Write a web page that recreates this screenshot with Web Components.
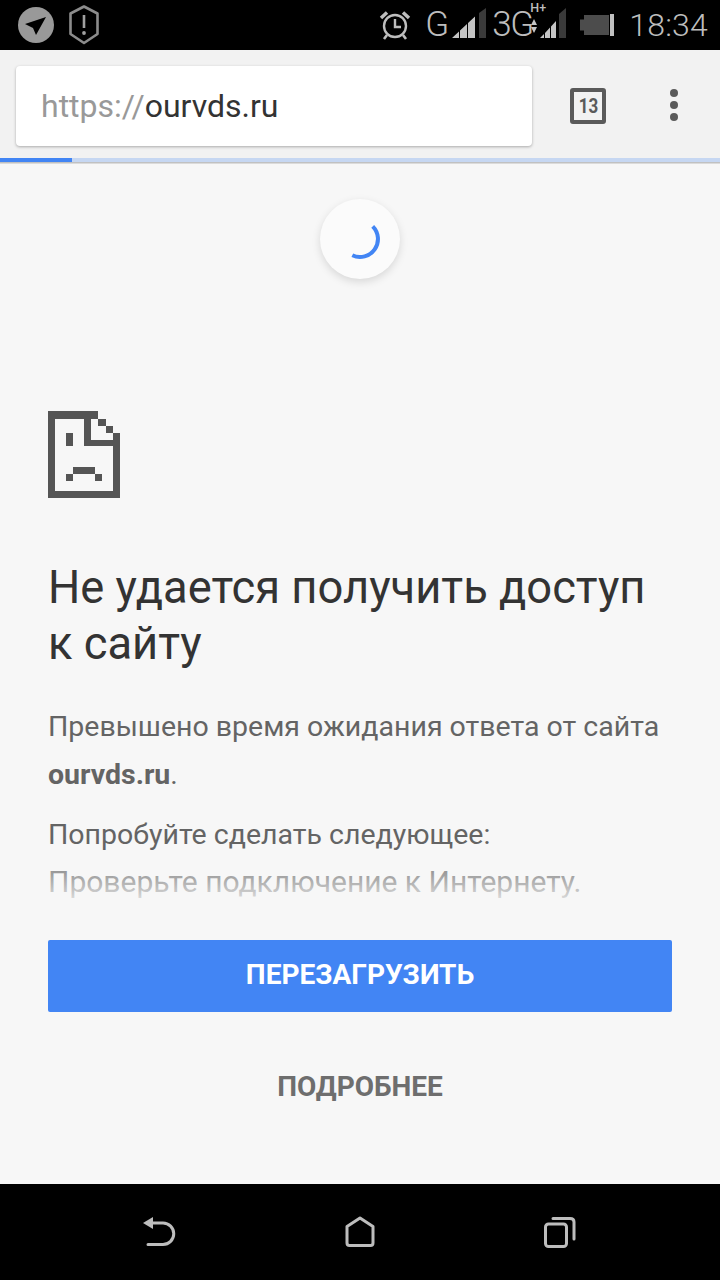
<!DOCTYPE html>
<html lang="ru">
<head>
<meta charset="utf-8">
<title>ourvds.ru</title>
<style>
    html, body { margin: 0; padding: 0; background: #000; }
    body { width: 720px; height: 1280px; overflow: hidden; display: flex; flex-direction: column; font-family: Roboto, sans-serif; }
</style>
</head>
<body>
<status-bar></status-bar>
<browser-toolbar url-scheme="https://" url-host="ourvds.ru" tabs="13"></browser-toolbar>
<error-page>
    <span slot="title">Не удается получить доступ к сайту</span>
    <span slot="message">Превышено время ожидания ответа от сайта <b>ourvds.ru</b>.</span>
    <span slot="try">Попробуйте сделать следующее:</span>
    <span slot="hint">Проверьте подключение к Интернету.</span>
</error-page>
<nav-bar></nav-bar>

<script>
class StatusBar extends HTMLElement {
    connectedCallback() {
        this.attachShadow({ mode: 'open' });
        this.shadowRoot.innerHTML = `
        <style>
            :host { display: flex; flex: none; height: 50px; background: #000; align-items: center; justify-content: space-between; color: #bdbdbd; font-family: Roboto, sans-serif; }
            .left { display: flex; align-items: center; gap: 14px; padding-left: 17px; }
            .right { display: flex; align-items: center; padding-right: 12px; height: 50px; position: relative; }
            svg { display: block; flex: none; }
            .g { font-size: 35px; font-weight: 300; line-height: 24px; }
            .hplus { position: absolute; left: 151px; top: 3px; font-size: 12.500px; font-weight: 500; line-height: 10px; }
            .time { font-size: 32px; font-weight: 300; line-height: 50px; margin-left: 15px; letter-spacing: .2px; }
        </style>
        <div class="left">
            <svg width="38" height="38" viewBox="0 0 38 38"><circle cx="19" cy="19" r="18" fill="#999"/><path d="M8 18 L29 11 L19 29 L16 22 Z" fill="#000"/></svg>
            <svg width="30" height="40" viewBox="0 0 30 40"><path d="M15 1.500 L28.500 8.500 V29 L15 38 L1.500 29 V8.500 Z" fill="none" stroke="#8c8c8c" stroke-width="2.600" stroke-linejoin="round"/><rect x="13.700" y="10" width="2.600" height="13" fill="#a0a0a0"/><circle cx="15" cy="28" r="1.900" fill="#a0a0a0"/></svg>
        </div>
        <div class="right">
            <svg width="32" height="32" viewBox="0 0 32 32"><g fill="none" stroke="#bdbdbd" stroke-width="2.400"><circle cx="16" cy="17" r="11"/><path d="M16 10 V18 H22"/><path d="M2 9 L8 3.500 M30 9 L24 3.500" stroke-width="3.500"/><path d="M8 26 L5 30 M24 26 L27 30" stroke-width="2.600"/></g></svg>
            <span class="g" style="margin-left:14px;width:23px">G</span>
            <svg width="34" height="30" viewBox="0 0 34 30" style="margin-left:4px;margin-top:-4px"><path d="M0 30 L7 23.500 V30 Z M8 22.500 L15 16 V30 H8 Z M16 15 L23 8.500 V30 H16 Z" fill="#c4c4c4"/><path d="M27 5 L34 0 V30 H27 Z" fill="#3a3a3a"/></svg>
            <span class="g" style="margin-left:6px;width:36px;letter-spacing:-1.500px;white-space:nowrap">3G</span>
            <span class="hplus">H+</span>
            <svg width="35" height="30" viewBox="0 0 35 30" style="margin-left:3px;margin-top:-4px"><path d="M0 17 L3 11 L6 17 Z M0 19 H6 L3 25 Z" fill="#c4c4c4"/><path d="M9 30 L13 26 V30 Z M14 25 L19 19.500 V30 H14 Z M20 18.500 L25 13 V30 H20 Z" fill="#c4c4c4"/><path d="M28 6 L35 0 V30 H28 Z" fill="#3a3a3a"/></svg>
            <svg width="34" height="22" viewBox="0 0 34 22" style="margin-left:14px"><path d="M0 5.500 H4 V1 H29 V21 H4 V16.500 H0 Z" fill="#4c4c4c"/><rect x="30" y="0" width="4" height="22" fill="#c0c0c0"/></svg>
            <span class="time">18:34</span>
        </div>`;
    }
}

class BrowserToolbar extends HTMLElement {
    connectedCallback() {
        this.attachShadow({ mode: 'open' });
        this.shadowRoot.innerHTML = `
        <style>
            :host { display: flex; flex-direction: column; flex: none; height: 114px; background: #f2f2f2; font-family: Roboto, sans-serif; position: relative; }
            .row { flex: 1; display: flex; align-items: flex-start; padding: 16px 0 0 16px; }
            .omnibox { width: 516px; height: 80px; box-sizing: border-box; background: #fff; border-radius: 4px; box-shadow: 0 1px 3px rgba(0,0,0,.3); display: flex; align-items: center; padding-left: 25px; font-size: 32px; color: #333; white-space: nowrap; }
            .scheme { color: #999; }
            .tabs { width: 36px; height: 36px; box-sizing: border-box; border: 4px solid #5a5a5a; border-radius: 3px; margin: 22px 0 0 38px; display: flex; align-items: center; justify-content: center; font-size: 20px; font-weight: 700; color: #5a5a5a; }
            .tabs span { display: block; transform: scaleX(.85); }
            .menu { display: flex; flex-direction: column; gap: 4px; margin: 23px 0 0 64px; }
            .menu i { display: block; width: 8px; height: 8px; border-radius: 50%; background: #5a5a5a; }
            .progress { flex: none; height: 4px; background: #c6d7f2; }
            .progress div { width: 72px; height: 4px; background: #4285f4; }
            .edge { flex: none; height: 2px; background: linear-gradient(#b4b4b4, #e8e8e8); }
        </style>
        <div class="row">
            <div class="omnibox"><span class="scheme">${this.getAttribute('url-scheme')}</span><span>${this.getAttribute('url-host')}</span></div>
            <div class="tabs"><span>${this.getAttribute('tabs')}</span></div>
            <div class="menu"><i></i><i></i><i></i></div>
        </div>
        <div class="progress"><div></div></div>
        <div class="edge"></div>`;
    }
}

class ErrorPage extends HTMLElement {
    connectedCallback() {
        this.attachShadow({ mode: 'open' });
        this.shadowRoot.innerHTML = `
        <style>
            :host { display: block; flex: 1; min-height: 0; background: #f7f7f7; position: relative; overflow: hidden; font-family: Roboto, sans-serif; color: #646464; }
            .spinner { position: absolute; left: 320px; top: 35px; width: 80px; height: 80px; border-radius: 50%; background: #fbfbfb; box-shadow: 0 3px 8px rgba(0,0,0,.13); }
            .spinner svg { display: block; }
            .main { padding: 247px 48px 0; height: 737px; box-sizing: border-box; overflow: hidden; position: relative; }
            .icon { display: block; width: 72px; height: 87px; }
            h1 { margin: 62px 0 0; font-size: 45.300px; line-height: 56px; font-weight: 400; color: #333; width: 620px; }
            p { margin: 0; font-size: 28.500px; line-height: 48px; width: 630px; white-space: nowrap; }
            .msg { margin-top: 31px; white-space: normal; width: 624px; }
            .try { margin-top: 12px; }
            .hint { font-size: 30px; margin-top: -1px; }
            .fade { position: absolute; left: 0; right: 0; top: 704px; height: 40px; background: linear-gradient(rgba(247,247,247,.3), rgba(247,247,247,.75) 70%, #f7f7f7); }
            .buttons { position: absolute; left: 48px; right: 48px; top: 776px; }
            button { display: block; width: 100%; border: 0; border-radius: 2px; font: 700 28px Roboto, sans-serif; margin: 0; padding: 0 0 3px; }
            .reload { height: 72px; background: #4285f4; color: #fff; }
            .details { height: 72px; margin-top: 39px; padding-bottom: 1px; background: none; color: #6e6e6e; }
        </style>
        <div class="main">
            <svg class="icon" viewBox="0 0 10 12" shape-rendering="crispEdges" fill="#555">
                <path d="M0 0H7V1H0ZM0 0H1V12H0ZM0 11H10V12H0ZM9 3H10V12H9ZM5 1H6V4.850H5ZM5 4H9.500V4.850H5ZM7 1H8V2H7ZM8 2H9V3H8Z"/>
                <path d="M2.500 3H3.500V4.850H2.500ZM3.500 7.800H6.500V8.750H3.500ZM2.500 8.750H3.500V9.700H2.500ZM6.500 8.750H7.500V9.700H6.500Z"/>
            </svg>
            <h1><slot name="title"></slot></h1>
            <p class="msg"><slot name="message"></slot></p>
            <p class="try"><slot name="try"></slot></p>
            <p class="hint"><slot name="hint"></slot></p>
        </div>
        <div class="fade"></div>
        <div class="buttons">
            <button class="reload">ПЕРЕЗАГРУЗИТЬ</button>
            <button class="details">ПОДРОБНЕЕ</button>
        </div>
        <div class="spinner">
            <svg width="80" height="80" viewBox="0 0 80 80"><path d="M52.700 27.300 A18 18 0 0 1 32.300 56.300" fill="none" stroke="#4285f4" stroke-width="4"/></svg>
        </div>`;
    }
}

class NavBar extends HTMLElement {
    connectedCallback() {
        this.attachShadow({ mode: 'open' });
        this.shadowRoot.innerHTML = `
        <style>
            :host { display: block; flex: none; height: 96px; background: #000; padding: 32px 60px 0; box-sizing: border-box; }
            svg { display: block; }
            .row { display: grid; grid-template-columns: repeat(3, 200px); justify-items: center; }
        </style>
        <div class="row">
            <svg width="36" height="32" viewBox="0 0 36 32" fill="none" stroke="#bdbdbd" stroke-width="3"><path d="M10 7 H21 A10.750 10.750 0 0 1 21 28.500 H6" stroke-linecap="round"/><path d="M1 7 L11 1 V13 Z" fill="#bdbdbd" stroke="none"/></svg>
            <svg width="30" height="32" viewBox="0 0 30 32" fill="none" stroke="#bdbdbd" stroke-width="3" stroke-linejoin="round"><path d="M15 2 L28 10.500 V27 Q28 29.500 25.500 29.500 H4.500 Q2 29.500 2 27 V10.500 Z"/></svg>
            <svg width="32" height="34" viewBox="0 0 32 34" fill="none" stroke="#bdbdbd" stroke-width="3" stroke-linecap="round"><rect x="1.500" y="8" width="21" height="22.500" rx="3"/><path d="M9 2.500 H26 Q30 2.500 30 6 V23"/></svg>
        </div>`;
    }
}

customElements.define('status-bar', StatusBar);
customElements.define('browser-toolbar', BrowserToolbar);
customElements.define('error-page', ErrorPage);
customElements.define('nav-bar', NavBar);
</script>
</body>
</html>
